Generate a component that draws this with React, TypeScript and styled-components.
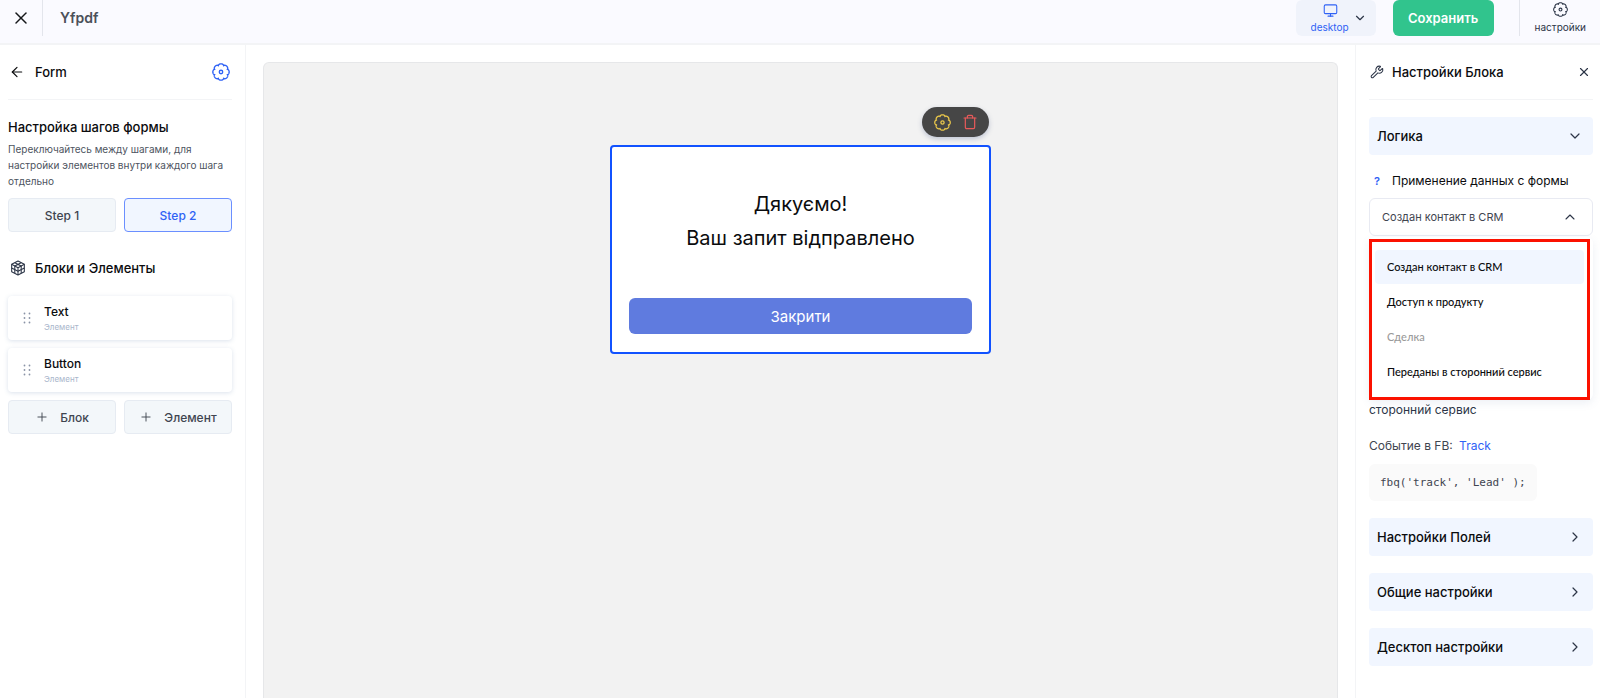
import React from 'react';
import styled, { createGlobalStyle } from 'styled-components';
import {
  ArrowLeft,
  ChevronDown,
  ChevronRight,
  ChevronUp,
  Monitor,
  Plus,
  Trash,
  Wrench,
  X,
} from 'lucide-react';

const color = {
  blue: '#2f62f5',
  outline: '#1152ff',
  pale: '#f1f6ff',
  ink: '#0b0c0e',
  slate: '#2c3547',
  text: '#3f4550',
  line: '#f3f4f6',
};

const GlobalStyle = createGlobalStyle`
  *, *::before, *::after { box-sizing: border-box; }
  body {
    margin: 0;
    background: #fff;
    color: ${color.ink};
    font-family: Inter, "Liberation Sans", sans-serif;
    font-size: 12px;
  }
  h1, h2, h3, p, ul, pre { margin: 0; padding: 0; }
  button, select { font: inherit; color: inherit; cursor: pointer; }
  svg { display: block; flex: none; }
`;

const Page = styled.div`
  display: flex;
  flex-direction: column;
  min-height: 100vh;
`;

const TopBar = styled.header`
  display: flex;
  align-items: flex-start;
  height: 45px;
  background: #fafaff;
  border-bottom: 2px solid ${color.line};
`;

const BarDivider = styled.span<{ $gap: number }>`
  width: 1px;
  height: 36px;
  margin-right: ${(p) => p.$gap}px;
  background: #e3e5ec;
`;

const IconButton = styled.button<{ $tone?: string }>`
  display: inline-flex;
  align-items: center;
  justify-content: center;
  padding: 0;
  border: 0;
  background: none;
  color: ${(p) => p.$tone ?? color.slate};
`;

const CloseButton = styled(IconButton)`
  width: 42px;
  height: 36px;
`;

const ProjectName = styled.h1`
  flex: 1;
  font-size: 14px;
  line-height: 36px;
  font-weight: 600;
  color: #4b5058;
`;

const DevicePicker = styled.label`
  position: relative;
  display: grid;
  grid-template-columns: auto 14px;
  align-items: center;
  column-gap: 3px;
  height: 36px;
  padding: 0 9px 0 15px;
  margin-right: 17px;
  border-radius: 6px;
  background: #f0f3fb;
  color: ${color.blue};
`;

const DeviceStack = styled.span`
  display: flex;
  flex-direction: column;
  align-items: center;
  gap: 2px;
`;

const DeviceSelect = styled.select`
  appearance: none;
  padding: 0;
  border: 0;
  background: none;
  font-size: 10px;
  line-height: 14px;
`;

const SaveButton = styled.button`
  height: 36px;
  width: 101px;
  margin-right: 25px;
  padding: 0;
  border: 0;
  border-radius: 6px;
  background: #31c48d;
  color: #fff;
  font-size: 13px;
  font-weight: 600;
`;

const SettingsButton = styled.button`
  display: flex;
  flex-direction: column;
  align-items: center;
  gap: 3px;
  padding: 2px 14px 0 0;
  border: 0;
  background: none;
  color: ${color.slate};
  font-size: 10px;
  line-height: 14px;
`;

const Workspace = styled.div`
  flex: 1;
  display: grid;
  grid-template-columns: 246px minmax(0, 1fr) 245px;
`;

const LeftPanel = styled.aside`
  padding: 0 13px 0 8px;
  border-right: 1px solid ${color.line};
`;

const RightPanel = styled.aside`
  padding: 0 7px 0 13px;
  border-left: 1px solid ${color.line};
`;

const PanelHead = styled.div`
  display: flex;
  align-items: center;
  height: 55px;
  padding: 0 2px 0 1px;
  border-bottom: 1px solid ${color.line};
`;

const PanelTitle = styled.h2`
  flex: 1;
  font-size: 13px;
  line-height: 20px;
  font-weight: 500;
`;

const IconSlot = styled.span<{ $width: number }>`
  display: flex;
  width: ${(p) => p.$width}px;
`;

const StepsIntro = styled.section`
  padding-top: 17px;
`;

const Description = styled.p`
  padding: 4px 0 9px;
  font-size: 10px;
  line-height: 16px;
  color: #4d5460;
`;

const ButtonPair = styled.div`
  display: grid;
  grid-template-columns: 1fr 1fr;
  gap: 8px;
`;

const TileButton = styled.button<{ $active?: boolean }>`
  display: flex;
  align-items: center;
  justify-content: center;
  gap: 11px;
  height: 34px;
  padding: 0;
  border: 1px solid ${(p) => (p.$active ? '#6b8fff' : '#e6ebf2')};
  border-radius: 4px;
  background: ${(p) => (p.$active ? color.pale : '#f3f7fa')};
  color: ${(p) => (p.$active ? color.blue : color.text)};
  font-size: 12px;
  font-weight: 500;
`;

const SectionHead = styled.div`
  display: flex;
  align-items: center;
  padding: 26px 0 18px 2px;
`;

const ElementList = styled.ul`
  display: grid;
  gap: 8px;
  padding-bottom: 8px;
  list-style: none;
`;

const ElementCard = styled.li`
  display: flex;
  align-items: center;
  gap: 13px;
  height: 44px;
  padding-left: 15px;
  border-radius: 4px;
  background: #fff;
  box-shadow: 0 1px 4px rgba(110, 140, 180, 0.25);
`;

const ElementName = styled.h3`
  font-size: 12px;
  line-height: 17px;
  font-weight: 500;
`;

const ElementKind = styled.p`
  font-size: 8px;
  line-height: 14px;
  color: #a9b6cb;
`;

const Canvas = styled.main`
  display: flex;
  flex-direction: column;
  align-items: center;
  margin: 17px 17px 0;
  padding-top: 82px;
  border: 1px solid #e6e7e9;
  border-bottom: 0;
  border-radius: 6px 6px 0 0;
  background: #f2f2f2;
`;

const FormBlock = styled.section`
  position: relative;
  width: 381px;
  max-width: 100%;
  padding: 40px 17px 18px;
  border: 2px solid ${color.outline};
  border-radius: 4px;
  background: #fff;
`;

const BlockToolbar = styled.div`
  position: absolute;
  right: 0;
  bottom: calc(100% + 10px);
  display: flex;
  align-items: center;
  justify-content: center;
  gap: 11px;
  width: 67px;
  height: 30px;
  border-radius: 15px;
  background: #464646;
  box-shadow: 0 2px 5px rgba(70, 90, 140, 0.3);
`;

const ThanksText = styled.p`
  padding-bottom: 43px;
  font-size: 20px;
  line-height: 34px;
  text-align: center;
`;

const FormButton = styled.button`
  display: block;
  width: 100%;
  height: 36px;
  border: 0;
  border-radius: 6px;
  background: #5f7bdf;
  color: #fff;
  font-size: 15px;
`;

const Accordion = styled.button`
  display: flex;
  align-items: center;
  justify-content: space-between;
  width: 100%;
  height: 38px;
  margin-top: 17px;
  padding: 0 10px 0 8px;
  border: 0;
  border-radius: 4px;
  background: ${color.pale};
  font-size: 13px;
  font-weight: 500;
`;

const FieldLabel = styled.div`
  display: flex;
  align-items: center;
  gap: 12px;
  padding: 17px 0 8px 5px;
  line-height: 18px;
`;

const Help = styled.span`
  color: ${color.blue};
  font-size: 11px;
  font-weight: 600;
`;

const Field = styled.div`
  position: relative;
  display: flex;
  align-items: center;
  height: 38px;
  padding-right: 14px;
  border: 1px solid #e8eaf2;
  border-radius: 6px;
`;

const FieldSelect = styled.select`
  flex: 1;
  height: 36px;
  padding: 0 12px;
  appearance: none;
  border: 0;
  background: none;
  color: ${color.text};
  font-size: 11px;
`;

const Menu = styled.div`
  position: absolute;
  z-index: 1;
  top: 38px;
  left: -1px;
  right: -1px;
  padding: 2px 3px 0 0;
  border-radius: 6px;
  background: #fff;
  box-shadow: 0 3px 8px rgba(110, 130, 170, 0.12);
`;

const MenuList = styled.ul`
  display: grid;
  gap: 1px;
  padding: 8px 3px;
  border: 3px solid #fb1100;
  background: #fff;
  list-style: none;
`;

const MenuItem = styled.li<{ $selected?: boolean; $disabled?: boolean }>`
  padding: 0 12px;
  border-radius: 4px;
  background: ${(p) => (p.$selected ? color.pale : 'none')};
  color: ${(p) => (p.$disabled ? '#9a9a9a' : color.ink)};
  font-family: Lato, "Noto Sans", sans-serif;
  font-size: 11px;
  line-height: 34px;
  font-weight: 500;
`;

const FieldHint = styled.p`
  padding-top: 165px;
  line-height: 18px;
  color: ${color.slate};
`;

const EventLine = styled.p`
  padding: 18px 0 9px;
  line-height: 18px;
  color: ${color.text};
`;

const EventLink = styled.a`
  margin-left: 3px;
  color: ${color.blue};
  text-decoration: none;
`;

const Code = styled.pre`
  width: fit-content;
  padding: 0 11px;
  border-radius: 6px;
  background: #fafafa;
  color: ${color.text};
  font-family: "DejaVu Sans Mono", "Liberation Mono", monospace;
  font-size: 11px;
  line-height: 37px;
`;

/* Outline of an eight-lobed cog, traced around the centre of a 24 unit box. */
const gearPath = (() => {
  const points: string[] = [];
  for (let i = 0; i < 192; i += 1) {
    const a = (i / 192) * Math.PI * 2;
    const r = 9 + 1.9 * Math.sqrt(Math.abs(Math.cos(4 * a)));
    points.push(`${(12 + r * Math.cos(a)).toFixed(2)} ${(12 + r * Math.sin(a)).toFixed(2)}`);
  }
  return `M${points.join('L')}Z`;
})();

function Gear({ size }: { size: number }) {
  return (
    <svg width={size} height={size} viewBox="0 0 24 24" fill="none" stroke="currentColor" strokeWidth="1.8" strokeLinejoin="round" aria-hidden="true">
      <path d={gearPath} />
      <circle cx="12" cy="12" r="2.3" />
    </svg>
  );
}

function Blocks() {
  return (
    <svg width="16" height="16" viewBox="0 0 24 24" fill="none" stroke={color.slate} strokeWidth="1.6" strokeLinejoin="round" aria-hidden="true">
      <path d="M12 1.5 21.5 6.5V17.5L12 22.5 2.5 17.5V6.5Z" />
      <path d="M2.5 6.5 12 11.5 21.5 6.5M12 11.5V22.5" />
      <path d="M7.2 4 16.8 9V20M16.8 4 7.2 9V20" />
      <path d="M2.5 12 12 17 21.5 12" />
    </svg>
  );
}

function Grip() {
  return (
    <svg width="8" height="12" viewBox="0 0 8 12" fill="#8a93a6" aria-hidden="true">
      {[1.5, 6, 10.5].map((y) => (
        <React.Fragment key={y}>
          <circle cx="1.5" cy={y} r="0.9" />
          <circle cx="6.5" cy={y} r="0.9" />
        </React.Fragment>
      ))}
    </svg>
  );
}

const elements = ['Text', 'Button'];
const sections = ['Настройки Полей', 'Общие настройки', 'Десктоп настройки'];
const targets = [
  { name: 'Создан контакт в CRM', selected: true },
  { name: 'Доступ к продукту' },
  { name: 'Сделка', disabled: true },
  { name: 'Переданы в сторонний сервис' },
];

export default function App() {
  return (
    <Page>
      <GlobalStyle />
      <TopBar>
        <CloseButton $tone="#15171a" aria-label="Закрыть">
          <X size={20} strokeWidth={1.8} />
        </CloseButton>
        <BarDivider $gap={17} />
        <ProjectName>Yfpdf</ProjectName>
        <DevicePicker>
          <DeviceStack>
            <Monitor size={15} strokeWidth={1.7} />
            <DeviceSelect aria-label="Устройство" defaultValue="desktop">
              <option value="desktop">desktop</option>
            </DeviceSelect>
          </DeviceStack>
          <ChevronDown size={14} color={color.slate} />
        </DevicePicker>
        <SaveButton>Сохранить</SaveButton>
        <BarDivider $gap={15} />
        <SettingsButton>
          <Gear size={15} />
          настройки
        </SettingsButton>
      </TopBar>

      <Workspace>
        <LeftPanel>
          <PanelHead>
            <IconSlot $width={26}>
              <IconButton $tone={color.ink} aria-label="Назад">
                <ArrowLeft size={16} strokeWidth={1.8} />
              </IconButton>
            </IconSlot>
            <PanelTitle>Form</PanelTitle>
            <IconButton $tone={color.blue} aria-label="Настройки формы">
              <Gear size={18} />
            </IconButton>
          </PanelHead>

          <StepsIntro>
            <PanelTitle>Настройка шагов формы</PanelTitle>
            <Description>
              Переключайтесь между шагами, для настройки элементов внутри каждого шага отдельно
            </Description>
            <ButtonPair>
              <TileButton>Step 1</TileButton>
              <TileButton $active>Step 2</TileButton>
            </ButtonPair>
          </StepsIntro>

          <SectionHead>
            <IconSlot $width={25}>
              <Blocks />
            </IconSlot>
            <PanelTitle>Блоки и Элементы</PanelTitle>
          </SectionHead>
          <ElementList>
            {elements.map((name) => (
              <ElementCard key={name}>
                <Grip />
                <div>
                  <ElementName>{name}</ElementName>
                  <ElementKind>Элемент</ElementKind>
                </div>
              </ElementCard>
            ))}
          </ElementList>
          <ButtonPair>
            <TileButton>
              <Plus size={14} strokeWidth={1.6} />
              Блок
            </TileButton>
            <TileButton>
              <Plus size={14} strokeWidth={1.6} />
              Элемент
            </TileButton>
          </ButtonPair>
        </LeftPanel>

        <Canvas>
          <FormBlock>
            <BlockToolbar>
              <IconButton $tone="#ecc94b" aria-label="Настроить блок">
                <Gear size={17} />
              </IconButton>
              <IconButton $tone="#e85a5a" aria-label="Удалить блок">
                <Trash size={16} strokeWidth={1.8} />
              </IconButton>
            </BlockToolbar>
            <ThanksText>
              Дякуємо!
              <br />
              Ваш запит відправлено
            </ThanksText>
            <FormButton>Закрити</FormButton>
          </FormBlock>
        </Canvas>

        <RightPanel>
          <PanelHead>
            <IconSlot $width={22}>
              <Wrench size={14} strokeWidth={1.8} color={color.slate} />
            </IconSlot>
            <PanelTitle>Настройки Блока</PanelTitle>
            <IconButton aria-label="Закрыть настройки">
              <X size={14} strokeWidth={2} />
            </IconButton>
          </PanelHead>

          <Accordion aria-expanded="true">
            Логика
            <ChevronDown size={16} strokeWidth={1.8} color={color.slate} />
          </Accordion>
          <FieldLabel>
            <Help>?</Help>
            <label htmlFor="target">Применение данных с формы</label>
          </FieldLabel>
          <Field>
            <FieldSelect id="target" defaultValue={targets[0].name}>
              {targets.map((t) => (
                <option key={t.name} disabled={t.disabled}>{t.name}</option>
              ))}
            </FieldSelect>
            <ChevronUp size={16} strokeWidth={1.6} color={color.slate} />
            <Menu>
              <MenuList role="listbox" aria-label="Применение данных с формы">
                {targets.map((t) => (
                  <MenuItem key={t.name} role="option" aria-selected={!!t.selected} $selected={t.selected} $disabled={t.disabled}>
                    {t.name}
                  </MenuItem>
                ))}
              </MenuList>
            </Menu>
          </Field>
          <FieldHint>сторонний сервис</FieldHint>
          <EventLine>
            Событие в FB: <EventLink href="#track">Track</EventLink>
          </EventLine>
          <Code>{"fbq('track', 'Lead' );"}</Code>

          {sections.map((name) => (
            <Accordion key={name} aria-expanded="false">
              {name}
              <ChevronRight size={16} strokeWidth={1.8} color={color.slate} />
            </Accordion>
          ))}
        </RightPanel>
      </Workspace>
    </Page>
  );
}
